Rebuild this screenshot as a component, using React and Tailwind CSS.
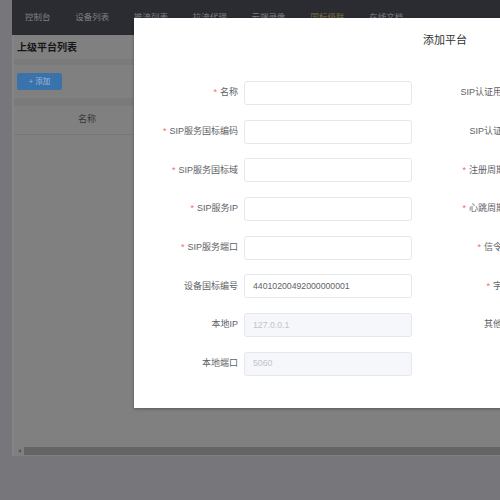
import React from "react";

const navItems = ["控制台", "设备列表", "推流列表", "拉流代理", "云端录像", "国标级联", "在线文档"];

const leftRows = [
  { label: "名称", req: true },
  { label: "SIP服务国标编码", req: true },
  { label: "SIP服务国标域", req: true },
  { label: "SIP服务IP", req: true },
  { label: "SIP服务端口", req: true },
  { label: "设备国标编号", value: "44010200492000000001" },
  { label: "本地IP", value: "127.0.0.1", disabled: true },
  { label: "本地端口", value: "5060", disabled: true },
];

const rightRows = [
  { label: "SIP认证用户名" },
  { label: "SIP认证密码" },
  { label: "注册周期(秒)", req: true },
  { label: "心跳周期(秒)", req: true },
  { label: "信令传输", req: true },
  { label: "字符集", req: true },
  { label: "其他选项" },
];

function Row({ row, labelW }) {
  return (
    <div className="flex items-center h-[24px]">
      <div
        className={`${labelW} shrink-0 pr-[6px] text-right text-[9px] text-[#606266] whitespace-nowrap`}
      >
        {row.req && <span className="text-[#f56c6c] mr-[3px]">*</span>}
        {row.label}
      </div>
      <div
        className={`w-[168px] h-[24px] shrink-0 rounded-[3px] border border-[#e4e7ed] flex items-center px-[8px] text-[8.7px] ${
          row.disabled ? "bg-[#f5f7fa] text-[#c0c4cc]" : "bg-white text-[#606266]"
        }`}
      >
        {row.value}
      </div>
    </div>
  );
}

export default function App() {
  return (
    <div className="relative w-[500px] h-[500px] overflow-hidden bg-[#77777b] flex font-['Liberation_Sans','Noto_Sans_CJK_SC',sans-serif]">
      <div className="w-[12px] shrink-0" />
      <div className="flex-1 min-w-0 flex flex-col">
        <div className="h-[35px] shrink-0 bg-[#2a2c32] flex items-center pl-[0.5px]">
          {navItems.map((t) => (
            <div
              key={t}
              className={`px-[12.4px] text-[8.5px] whitespace-nowrap ${
                t === "国标级联" ? "text-[#80703c]" : "text-[#7d8087]"
              }`}
            >
              {t}
            </div>
          ))}
        </div>
        <div className="h-[421px] shrink-0 bg-[#808080] flex flex-col border-l-[2px] border-[#848486]">
          <div className="h-[24px] shrink-0 flex items-center px-[3px] text-[10px] font-bold text-[#161616]">
            上级平台列表
          </div>
          <div className="h-[6px] shrink-0 bg-[#7a7a7a]" />
          <div className="h-[33px] shrink-0 flex items-center px-[3px]">
            <div className="w-[45px] h-[17px] rounded-[2px] bg-[#3a72ab] flex items-center justify-center text-[7.5px] text-[#9dbbd9]">
              + 添加
            </div>
          </div>
          <div className="h-[7px] shrink-0 bg-[#7a7a7a]" />
          <div className="flex-1 flex flex-col border-t border-[#7b7b7b]">
            <div className="h-[29px] shrink-0 flex items-center border-b border-[#777777]">
              <div className="w-[146px] text-center text-[9px] text-[#383838]">名称</div>
            </div>
            <div className="flex-1" />
          </div>
          <div className="h-[10px] shrink-0 flex items-center">
            <div className="w-[10px] h-full flex items-center justify-center">
              <div className="w-0 h-0 border-y-[2.5px] border-y-transparent border-r-[3px] border-r-[#555555]" />
            </div>
            <div className="flex-1 h-[8px] bg-[#646464]" />
          </div>
        </div>
        <div className="flex-1" />
      </div>

      <div className="absolute left-[134px] top-[18px] w-[622px] h-[390px] bg-white shadow-[0_1px_3px_rgba(0,0,0,0.3)] flex flex-col">
        <div className="h-[44px] shrink-0 flex items-center justify-center text-[11px] text-[#303133]">
          添加平台
        </div>
        <div className="flex pt-[19px]">
          <div className="flex flex-col gap-y-[14.7px]">
            {leftRows.map((r) => (
              <Row key={r.label} row={r} labelW="w-[110px]" />
            ))}
          </div>
          <div className="flex flex-col gap-y-[14.7px] ml-[2px]">
            {rightRows.map((r) => (
              <Row key={r.label} row={r} labelW="w-[112px]" />
            ))}
          </div>
        </div>
      </div>
    </div>
  );
}
